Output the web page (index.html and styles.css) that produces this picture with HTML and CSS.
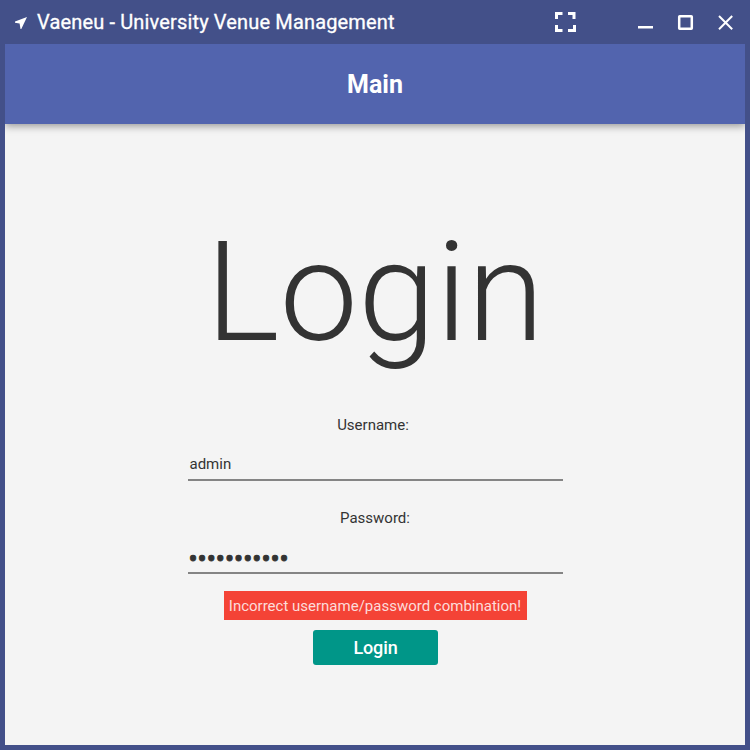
FILE: index.html
```
<!DOCTYPE html>
<html lang="en">
<head>
<meta charset="utf-8">
<title>Vaeneu - University Venue Management</title>
<link rel="stylesheet" href="styles.css">
</head>
<body>
<div class="window">
  <header class="titlebar">
    <svg class="logo" width="14" height="14" viewBox="0 0 14 14"><path d="M13 1L1 5.500v1.300l4.600.8L6.500 13h.8z" fill="#fff"/></svg>
    <span class="title">Vaeneu - University Venue Management</span>
    <div class="controls">
      <svg class="expand" width="40" height="44" viewBox="0 0 40 44"><path d="M11.500 19v-5.500h6M23 13.500h6v5.500M29.500 25v5.500h-6.500M17.500 30.500h-6v-5.500"/></svg>
      <svg class="minimize" width="40" height="44" viewBox="0 0 40 44"><path d="M13 27.250h15"/></svg>
      <svg width="40" height="44" viewBox="0 0 40 44"><rect x="14.200" y="16.200" width="12.600" height="12.600" rx=".5"/></svg>
      <svg class="close" width="40" height="44" viewBox="0 0 40 44"><path d="M14 16l13.200 13.200M27.200 16l-13.200 13.200"/></svg>
    </div>
  </header>
  <div class="toolbar">Main</div>
  <main class="content">
    <h1 class="heading">Login</h1>
    <div class="label user">Username:</div>
    <div class="field">admin</div>
    <div class="label">Password:</div>
    <div class="field password">•••••••••••</div>
    <div class="error">Incorrect username/password combination!</div>
    <button class="login">Login</button>
  </main>
</div>
</body>
</html>
```
FILE: styles.css
```
body { margin: 0; font-family: Roboto, sans-serif; }
.window { box-sizing: border-box; width: 750px; height: 750px; padding: 0 5px 5px; background: #435089; display: flex; flex-direction: column; }
.titlebar { height: 44px; display: flex; align-items: center; color: #fff; flex: none; }
.logo { margin: 2px 9px 0 9px; }
.title { font-size: 20px; font-weight: 400; letter-spacing: 0.15px; -webkit-text-stroke: 0.3px #fff; }
.controls { margin-left: auto; display: flex; }
.controls svg { fill: none; stroke: #fff; stroke-width: 2.500; }
.controls .close { stroke-width: 2; }
.controls .expand { stroke-width: 3; }
.minimize { margin-left: 40px; }
.toolbar { height: 80px; flex: none; background: #5264ae; color: #fff; font-size: 25px; font-weight: 700; line-height: 82px; text-align: center; box-shadow: 0 2px 8px rgba(0,0,0,.4); clip-path: inset(0 0 -14px); z-index: 1; }
.content { flex: 1; background: #f4f4f4; display: flex; flex-direction: column; align-items: center; color: #333; }
.heading { margin: 83px 0 38px; font-size: 140px; line-height: 170px; font-weight: 300; }
.label { font-size: 15px; line-height: 20px; }
.user { position: relative; left: -2px; }
.field { box-sizing: border-box; width: 375px; height: 46px; padding: 18px 0 0 2px; margin-bottom: 27px; border-bottom: 2px solid #848484; font-size: 15px; line-height: 22px; }
.password { font-size: 27px; margin-bottom: 17px; padding: 20px 0 0 1px; -webkit-text-stroke: 0.9px #333; }
.error { box-sizing: border-box; width: 303px; height: 29px; background: #f44336; color: #fcdcda; font-size: 15px; line-height: 30px; text-align: center; white-space: nowrap; }
.login { width: 125px; height: 35px; margin-top: 10px; padding: 1px 0 0 1px; border: 0; border-radius: 3px; background: #009688; color: #fff; font: 500 18px/34px Roboto, sans-serif; letter-spacing: -0.1px; }
```
